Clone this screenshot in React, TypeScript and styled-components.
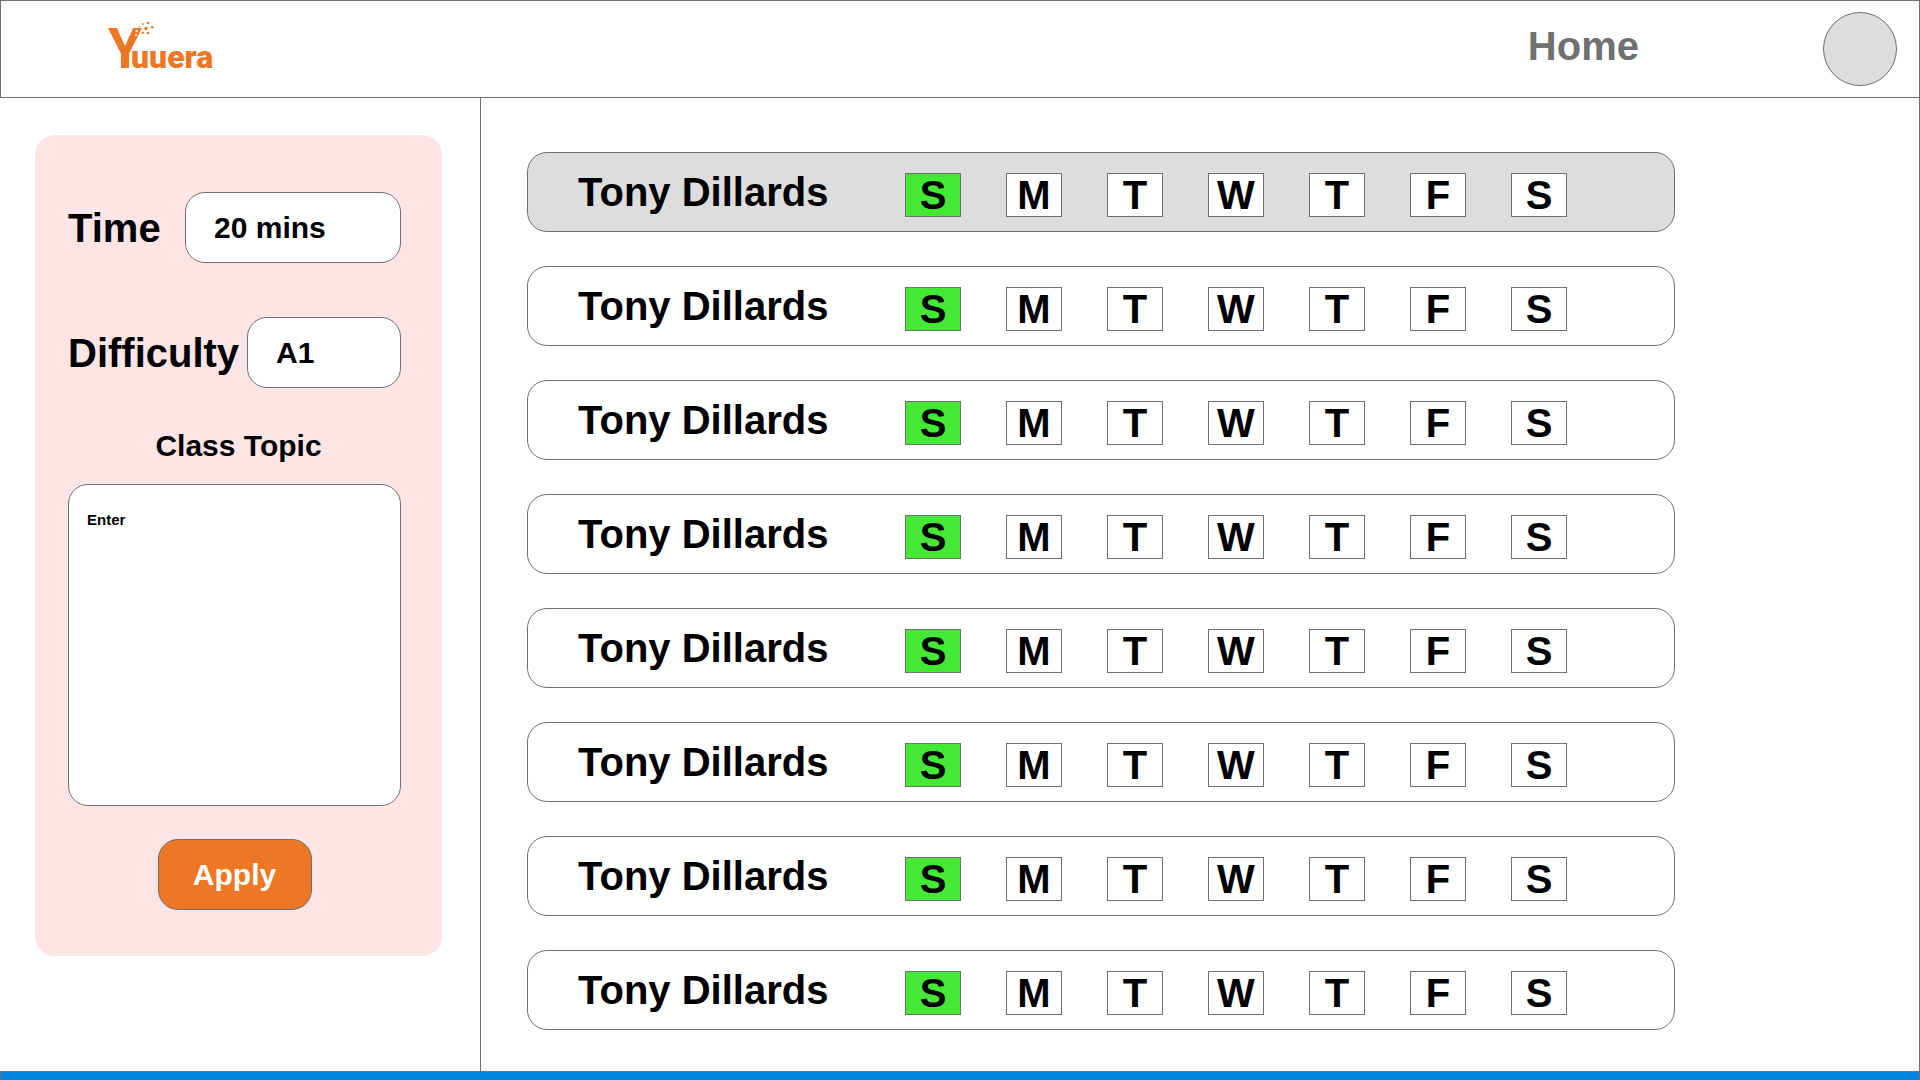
import React, { useState } from "react";
import styled, { createGlobalStyle } from "styled-components";

const LINE = "#707070";
const ORANGE = "#ed7724";
const GREY = "#dddddd";

const GlobalStyle = createGlobalStyle`
  *, *::before, *::after { box-sizing: border-box; }
  body {
    margin: 0;
    background: #fff;
    color: #000;
    font-family: "Liberation Sans", Arial, sans-serif;
    font-weight: 700;
  }
  button, input, textarea { font: inherit; color: inherit; }
`;

const Page = styled.div`
  min-height: 100vh;
  display: flex;
  flex-direction: column;
`;

const Header = styled.header`
  display: flex;
  align-items: center;
  justify-content: space-between;
  padding: 11px 22px 11px 100px;
  border: 1px solid ${LINE};
`;

const HomeLogo = styled.svg`
  display: block;
  width: 124px;
  height: 74px;
  fill: ${ORANGE};
  font-family: Roboto, "Liberation Sans", sans-serif;
  font-weight: 700;
`;

const Nav = styled.nav`
  display: flex;
  align-items: center;
  gap: 184px;
`;

const NavLink = styled.a`
  padding-bottom: 6px;
  color: ${LINE};
  font-size: 40px;
  line-height: 46px;
  text-decoration: none;
`;

const Avatar = styled.button`
  width: 74px;
  height: 74px;
  padding: 0;
  border: 1px solid ${LINE};
  border-radius: 50%;
  background: ${GREY};
`;

const Body = styled.div`
  flex: 1;
  display: grid;
  grid-template-columns: 480px 1fr;
`;

const Sidebar = styled.aside`
  padding: 37px 38px 37px 35px;
`;

const Panel = styled.form`
  padding: 57px 33px 46px;
  border-radius: 20px;
  background: #fde5e5;
`;

const Group = styled.div`
  display: flex;
  flex-direction: column;
  gap: 54px;
  padding-right: 8px;
`;

const Field = styled.div`
  display: flex;
  align-items: center;
  justify-content: space-between;
`;

const FieldLabel = styled.label`
  font-size: 40px;
  line-height: 46px;
`;

const TextInput = styled.input<{ $wide?: boolean }>`
  width: ${(p) => (p.$wide ? 216 : 154)}px;
  height: 71px;
  padding: 0 28px;
  border: 1px solid ${LINE};
  border-radius: 20px;
  background: #fff;
  font-size: 30px;
`;

const TopicLabel = styled.label`
  display: block;
  padding: 40px 0 20px;
  font-size: 30px;
  line-height: 36px;
  text-align: center;
`;

const TopicBox = styled.textarea`
  display: block;
  width: 100%;
  height: 322px;
  padding: 26px 18px;
  border: 1px solid ${LINE};
  border-radius: 20px;
  background: #fff;
  font-size: 15px;
  line-height: 18px;
  resize: none;

  &::placeholder { color: #000; opacity: 1; }
`;

const TopicGroup = styled(Group)`
  align-items: center;
  gap: 33px;
`;

const ApplyButton = styled.button`
  width: 154px;
  height: 71px;
  border: 1px solid ${LINE};
  border-radius: 20px;
  background: ${ORANGE};
  color: #fff;
  font-size: 30px;
`;

const Main = styled.main`
  padding: 54px 46px 41px;
  border: solid ${LINE};
  border-width: 0 1px;
`;

const StudentList = styled.ul`
  display: flex;
  flex-direction: column;
  gap: 34px;
  max-width: 1148px;
  margin: 0;
  padding: 0;
  list-style: none;
`;

const Student = styled.li<{ $selected: boolean }>`
  display: flex;
  align-items: center;
  height: 80px;
  padding: 0 50px;
  border: 1px solid ${LINE};
  border-radius: 20px;
  background: ${(p) => (p.$selected ? GREY : "#fff")};
`;

const StudentName = styled.span`
  flex: 0 0 327px;
  font-size: 40px;
  line-height: 46px;
`;

const Days = styled.div`
  display: flex;
  gap: 45px;
  padding-top: 6px;
`;

const Day = styled.button<{ $on: boolean }>`
  display: flex;
  align-items: center;
  justify-content: center;
  width: 56px;
  height: 44px;
  padding: 0;
  border: 1px solid ${LINE};
  background: ${(p) => (p.$on ? "#44e936" : "#fff")};
  font-size: 40px;
  line-height: 46px;
`;

const Footer = styled.footer`
  height: 9px;
  border: solid ${LINE};
  border-width: 1px 1px 0;
  background: #0085e1;
`;

type Spark = { x: number; y: number; r: number; color?: string };

const SPARKS: Spark[] = [
  { x: 42, y: 12, r: 0.9 },
  { x: 47, y: 11, r: 1.3 },
  { x: 45, y: 16.5, r: 1.7 },
  { x: 51.3, y: 15.3, r: 1.3 },
  { x: 47, y: 21, r: 1.3 },
  { x: 41.7, y: 20.7, r: 1.2 },
  { x: 38.7, y: 14.5, r: 0.7 },
  { x: 35.7, y: 19, r: 1.2, color: "#fff" },
  { x: 35, y: 23, r: 0.9, color: "#fff" },
];

const DAYS = ["S", "M", "T", "W", "T", "F", "S"];
const STUDENTS = Array.from({ length: 8 }, () => "Tony Dillards");

function Logo() {
  return (
    <HomeLogo viewBox="0 0 124 74" role="img" aria-label="Yuuera">
      <text y="56">
        <tspan x="7" fontSize="55">Y</tspan>
        <tspan x="30" fontSize="32" fontWeight="900">uuera</tspan>
      </text>
      {SPARKS.map(({ x, y, r, color }) => (
        <circle key={`${x}-${y}`} cx={x} cy={y} r={r} fill={color} />
      ))}
    </HomeLogo>
  );
}

function StudentRow({ name, selected }: { name: string; selected: boolean }) {
  const [active, setActive] = useState(0);
  return (
    <Student $selected={selected}>
      <StudentName>{name}</StudentName>
      <Days>
        {DAYS.map((day, i) => (
          <Day
            key={i}
            type="button"
            $on={i === active}
            aria-pressed={i === active}
            onClick={() => setActive(i)}
          >
            {day}
          </Day>
        ))}
      </Days>
    </Student>
  );
}

export default function App() {
  return (
    <Page>
      <GlobalStyle />
      <Header>
        <Logo />
        <Nav>
          <NavLink href="#home">Home</NavLink>
          <Avatar type="button" aria-label="Profile" />
        </Nav>
      </Header>
      <Body>
        <Sidebar>
          <Panel onSubmit={(e) => e.preventDefault()}>
            <Group>
              <Field>
                <FieldLabel htmlFor="time">Time</FieldLabel>
                <TextInput id="time" $wide defaultValue="20 mins" />
              </Field>
              <Field>
                <FieldLabel htmlFor="difficulty">Difficulty</FieldLabel>
                <TextInput id="difficulty" defaultValue="A1" />
              </Field>
            </Group>
            <TopicLabel htmlFor="topic">Class Topic</TopicLabel>
            <TopicGroup>
              <TopicBox id="topic" placeholder="Enter" />
              <ApplyButton type="submit">Apply</ApplyButton>
            </TopicGroup>
          </Panel>
        </Sidebar>
        <Main>
          <StudentList>
            {STUDENTS.map((name, i) => (
              <StudentRow key={i} name={name} selected={i === 0} />
            ))}
          </StudentList>
        </Main>
      </Body>
      <Footer />
    </Page>
  );
}
